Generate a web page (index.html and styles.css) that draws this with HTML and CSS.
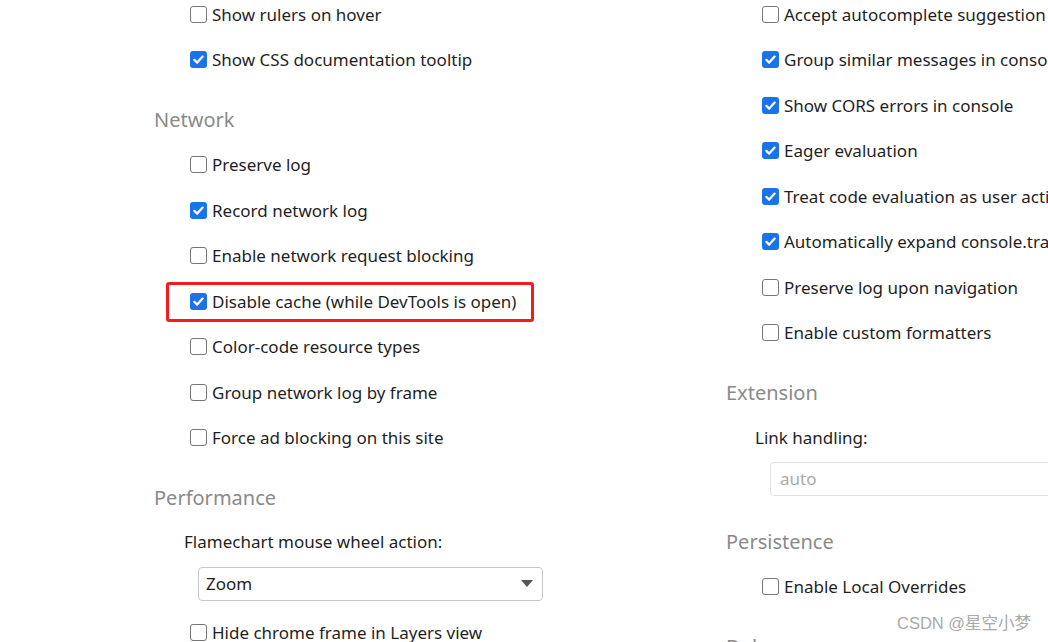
FILE: index.html
```html
<!DOCTYPE html>
<html>
<head>
<meta charset="utf-8">
<link rel="stylesheet" href="styles.css">
</head>
<body>
<div class="page">
  <div class="col">
    <div class="opt"><span class="cb"></span>Show rulers on hover</div>
    <div class="opt"><span class="cb on"><svg viewBox="0 0 16 16"><path d="M3.6 8.4 L6.6 11.3 L12.4 4.9"/></svg></span>Show CSS documentation tooltip</div>
    <h2 class="head">Network</h2>
    <div class="opt"><span class="cb"></span>Preserve log</div>
    <div class="opt"><span class="cb on"><svg viewBox="0 0 16 16"><path d="M3.6 8.4 L6.6 11.3 L12.4 4.9"/></svg></span>Record network log</div>
    <div class="opt"><span class="cb"></span>Enable network request blocking</div>
    <div class="opt marked"><span class="cb on"><svg viewBox="0 0 16 16"><path d="M3.6 8.4 L6.6 11.3 L12.4 4.9"/></svg></span>Disable cache (while DevTools is open)</div>
    <div class="opt"><span class="cb"></span>Color-code resource types</div>
    <div class="opt"><span class="cb"></span>Group network log by frame</div>
    <div class="opt"><span class="cb"></span>Force ad blocking on this site</div>
    <h2 class="head">Performance</h2>
    <div class="label">Flamechart mouse wheel action:</div>
    <div class="select"><span>Zoom</span><span class="arrow"></span></div>
    <div class="opt"><span class="cb"></span>Hide chrome frame in Layers view</div>
  </div>
  <div class="col col-r">
    <div class="opt"><span class="cb"></span>Accept autocomplete suggestion on Enter</div>
    <div class="opt"><span class="cb on"><svg viewBox="0 0 16 16"><path d="M3.6 8.4 L6.6 11.3 L12.4 4.9"/></svg></span>Group similar messages in console</div>
    <div class="opt"><span class="cb on"><svg viewBox="0 0 16 16"><path d="M3.6 8.4 L6.6 11.3 L12.4 4.9"/></svg></span>Show CORS errors in console</div>
    <div class="opt"><span class="cb on"><svg viewBox="0 0 16 16"><path d="M3.6 8.4 L6.6 11.3 L12.4 4.9"/></svg></span>Eager evaluation</div>
    <div class="opt"><span class="cb on"><svg viewBox="0 0 16 16"><path d="M3.6 8.4 L6.6 11.3 L12.4 4.9"/></svg></span>Treat code evaluation as user action</div>
    <div class="opt"><span class="cb on"><svg viewBox="0 0 16 16"><path d="M3.6 8.4 L6.6 11.3 L12.4 4.9"/></svg></span>Automatically expand console.trace() messages</div>
    <div class="opt"><span class="cb"></span>Preserve log upon navigation</div>
    <div class="opt"><span class="cb"></span>Enable custom formatters</div>
    <h2 class="head">Extension</h2>
    <div class="label label-r">Link handling:</div>
    <div class="select select-r disabled"><span>auto</span></div>
    <h2 class="head">Persistence</h2>
    <div class="opt"><span class="cb"></span>Enable Local Overrides</div>
    <h2 class="head">Debugger</h2>
  </div>
</div>
<div class="watermark">CSDN @星空小梦</div>
</body>
</html>
```

FILE: styles.css
```css
html, body {
  margin: 0;
  padding: 0;
  width: 1048px;
  height: 642px;
  overflow: hidden;
  background: #ffffff;
}

body {
  font-family: "Noto Sans", "Open Sans", sans-serif;
  font-size: 17px;
  color: #1f1f1f;
  position: relative;
}

.page {
  display: grid;
  grid-template-columns: 572px 322px;
  padding-left: 154px;
  margin-top: -8.75px;
}

.col {
  display: flex;
  flex-direction: column;
  min-width: 0;
}

.col-r {
  overflow: hidden;
}

.opt {
  position: relative;
  display: flex;
  align-items: center;
  height: 45.5px;
  margin-left: 36px;
  white-space: nowrap;
}

.cb {
  flex: none;
  box-sizing: border-box;
  width: 17px;
  height: 17px;
  margin-right: 5px;
  border: 1.5px solid #767676;
  border-radius: 3px;
  background: #fff;
  display: flex;
  align-items: center;
  justify-content: center;
}

.cb.on {
  border: none;
  background: #1a73e8;
}

.cb svg {
  width: 15px;
  height: 15px;
}

.cb svg path {
  fill: none;
  stroke: #ffffff;
  stroke-width: 2.4;
  stroke-linecap: round;
  stroke-linejoin: round;
}

.marked::after {
  content: "";
  position: absolute;
  left: -24px;
  top: 4px;
  width: 368px;
  height: 40px;
  box-sizing: border-box;
  border: 3px solid #f41c1c;
  border-radius: 3px;
}

.head {
  margin: 26px 0 9.5px 0;
  font-size: 20px;
  font-weight: 400;
  line-height: 24px;
  color: #8a8a8a;
  white-space: nowrap;
}

.label {
  margin-left: 30px;
  padding-top: 10px;
  line-height: 24px;
  white-space: nowrap;
}

.label-r {
  margin-left: 29px;
  padding-top: 11px;
}

.select {
  box-sizing: border-box;
  margin: 12.75px 0 9.25px 44px;
  width: 345px;
  height: 34px;
  border: 1px solid #c8c8c8;
  border-radius: 4px;
  display: flex;
  align-items: center;
  justify-content: space-between;
  padding: 0 8px 0 7px;
  white-space: nowrap;
}

.arrow {
  width: 0;
  height: 0;
  border-left: 6px solid transparent;
  border-right: 6px solid transparent;
  border-top: 7px solid #555;
  margin-right: 1px;
}

.select-r {
  margin: 11.75px 0 8.75px 44px;
  width: 320px;
  border-color: #e2e2e2;
  padding-left: 9px;
}

.disabled {
  color: #aaaaaa;
}

.watermark {
  position: absolute;
  left: 897px;
  top: 612px;
  font-family: "Liberation Sans", "Noto Sans CJK SC", sans-serif;
  font-size: 16.5px;
  line-height: 22px;
  color: #a9a9a9;
  white-space: nowrap;
}
```
